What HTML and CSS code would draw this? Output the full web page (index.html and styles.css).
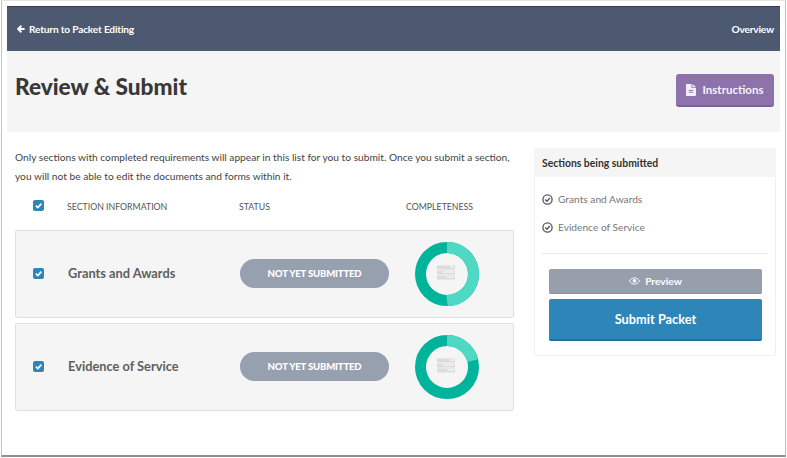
FILE: index.html
```html
<!DOCTYPE html>
<html lang="en">
<head>
<meta charset="utf-8">
<title>Review &amp; Submit</title>
<link rel="stylesheet" href="styles.css">
</head>
<body>
<div class="window">
  <div class="topbar">
    <a class="toplink"><svg class="arrow" viewBox="0 0 10 10"><path d="M5.500 1 1.500 5l4 4M2 5H9.500" fill="none" stroke="#fff" stroke-width="2.400"/></svg>Return to Packet Editing</a>
    <a class="toplink">Overview</a>
  </div>
  <div class="titleband">
    <h1>Review &amp; Submit</h1>
    <button class="btn-instructions"><svg class="docicon" viewBox="0 0 11 13"><path d="M0 1a1 1 0 0 1 1-1h5v4h5v8a1 1 0 0 1-1 1H1a1 1 0 0 1-1-1z" fill="#f3eef7"/><path d="M7 0l4 3.200H7z" fill="#f3eef7"/><path d="M3 7h5M3 9h5" stroke="#8e72ac" stroke-width="1"/></svg>Instructions</button>
  </div>
  <div class="content">
    <main class="main">
      <p class="intro">Only sections with completed requirements will appear in this list for you to submit. Once you submit a section,<br>you will not be able to edit the documents and forms within it.</p>
      <div class="headrow">
        <span class="cell-check"><span class="checkbox"><svg viewBox="0 0 11 11"><path d="M2.800 5.600 4.800 7.500 8.400 3.600" fill="none" stroke="#fff" stroke-width="1.700"/></svg></span></span>
        <span class="cell-name headlabel">SECTION INFORMATION</span>
        <span class="cell-status headlabel">STATUS</span>
        <span class="cell-comp headlabel">COMPLETENESS</span>
      </div>
      <div class="row">
        <span class="cell-check"><span class="checkbox"><svg viewBox="0 0 11 11"><path d="M2.800 5.600 4.800 7.500 8.400 3.600" fill="none" stroke="#fff" stroke-width="1.700"/></svg></span></span>
        <span class="cell-name rowname">Grants and Awards</span>
        <span class="cell-status"><span class="pill">NOT YET SUBMITTED</span></span>
        <svg class="donut" viewBox="0 0 64 64">
          <circle cx="32" cy="32" r="26.500" fill="none" stroke="#00b39b" stroke-width="11"/>
          <circle cx="32" cy="32" r="26.500" fill="none" stroke="#4fd9c5" stroke-width="11" pathLength="100" stroke-dasharray="50 50" transform="rotate(-90 32 32)"/>
          <path d="M22 23.500h18v4H22zM22 28.500h18v4H22zM22 33.500h18v4H22z" fill="#dcdcdc"/>
          <path d="M35 25h4M28 30h11M32 35h7" stroke="#fff" stroke-width="1"/>
        </svg>
      </div>
      <div class="row">
        <span class="cell-check"><span class="checkbox"><svg viewBox="0 0 11 11"><path d="M2.800 5.600 4.800 7.500 8.400 3.600" fill="none" stroke="#fff" stroke-width="1.700"/></svg></span></span>
        <span class="cell-name rowname">Evidence of Service</span>
        <span class="cell-status"><span class="pill">NOT YET SUBMITTED</span></span>
        <svg class="donut" viewBox="0 0 64 64">
          <circle cx="32" cy="32" r="26.500" fill="none" stroke="#00b39b" stroke-width="11"/>
          <circle cx="32" cy="32" r="26.500" fill="none" stroke="#4fd9c5" stroke-width="11" pathLength="100" stroke-dasharray="21 79" transform="rotate(-90 32 32)"/>
          <path d="M22 23.500h18v4H22zM22 28.500h18v4H22zM22 33.500h18v4H22z" fill="#dcdcdc"/>
          <path d="M35 25h4M28 30h11M32 35h7" stroke="#fff" stroke-width="1"/>
        </svg>
      </div>
    </main>
    <aside class="panel">
      <div class="panel-head">Sections being submitted</div>
      <div class="panel-body">
        <ul class="sections">
          <li><svg class="tick" viewBox="0 0 11 11"><circle cx="5.500" cy="5.500" r="4.600" fill="none" stroke="#555" stroke-width="1.300"/><path d="M3.200 5.600 4.900 7.200 7.900 4" fill="none" stroke="#555" stroke-width="1.400"/></svg>Grants and Awards</li>
          <li><svg class="tick" viewBox="0 0 11 11"><circle cx="5.500" cy="5.500" r="4.600" fill="none" stroke="#555" stroke-width="1.300"/><path d="M3.200 5.600 4.900 7.200 7.900 4" fill="none" stroke="#555" stroke-width="1.400"/></svg>Evidence of Service</li>
        </ul>
        <div class="actions">
          <button class="btn-preview"><svg class="eye" viewBox="0 0 12 8"><path d="M.5 4C2 1.600 4 .6 6 .6S10 1.600 11.500 4C10 6.400 8 7.400 6 7.400S2 6.400.5 4Z" fill="none" stroke="#fff" stroke-width="1"/><circle cx="6" cy="3.800" r="2" fill="#fff"/></svg>Preview</button>
          <button class="btn-submit">Submit Packet</button>
        </div>
      </div>
    </aside>
  </div>
</div>
</body>
</html>
```
FILE: styles.css
```css
* { box-sizing: border-box; }
html, body { margin: 0; padding: 0; background: #fff; }
body { width: 787px; height: 458px; overflow: hidden; font-family: "Lato", sans-serif; color: #444; }
.window {
  width: 785px;
  height: 457px;
  margin-left: 1px;
  padding: 5px 5px 0 5px;
  border-left: 1px solid #c4c4c4;
  border-right: 1px solid #bdbdbd;
  border-top: 1px solid #e4e4e4;
  border-bottom: 2px solid #8f8f8f;
}
.topbar {
  height: 45px;
  background: #4c5970;
  border-top: 1px solid #363f50;
  display: flex;
  justify-content: space-between;
  align-items: center;
  padding: 0 6px 0 10px;
}
.toplink { display: flex; align-items: center; gap: 4px; color: #fff; font-size: 10.200px; font-weight: 700; letter-spacing: -0.2px; }
.arrow { width: 8px; height: 8px; }
.titleband {
  height: 81px;
  background: #f5f5f5;
  display: flex;
  justify-content: space-between;
  align-items: flex-start;
  padding: 23px 6px 0 8px;
}
h1 { margin: 0; font-size: 22.600px; line-height: 26px; font-weight: 900; color: #383838; font-family: "Lato", sans-serif; }
.btn-instructions {
  width: 98px;
  height: 33px;
  border: 0;
  border-bottom: 2px solid #7a5f98;
  border-radius: 3px;
  background: #8e72ac;
  color: #f6f2fa;
  font: 700 11.500px "Lato", sans-serif;
  display: flex;
  align-items: center;
  justify-content: center;
  gap: 6px;
  padding: 0;
}
.docicon { width: 10px; height: 12px; }
.content { display: flex; padding: 16px 0 0 8px; gap: 20px; }
.main { width: 499px; }
.intro { margin: 0; font-size: 10.200px; line-height: 19px; color: #444; white-space: nowrap; }
.headrow { display: flex; align-items: center; height: 24px; margin-top: 7px; color: #555; }
.headlabel { font-size: 8.750px; padding-top: 3px; }
.cell-check { width: 52px; padding-left: 18px; display: flex; flex: none; }
.cell-name { width: 172px; flex: none; }
.cell-status { width: 167px; flex: none; }
.cell-comp { flex: none; }
.checkbox { width: 11px; height: 11px; border-radius: 2px; background: #2e86b8; display: block; }
.checkbox svg { display: block; width: 11px; height: 11px; }
.row {
  display: flex;
  align-items: center;
  height: 88px;
  margin-top: 5px;
  background: #f5f5f5;
  border: 1px solid #e0e0e0;
  border-radius: 2px;
}
.headrow + .row { margin-top: 13px; }
.row .cell-check { width: 52px; padding: 0 0 1px 17px; }
.rowname { font-size: 12.800px; font-weight: 700; color: #5f5f5f; padding-bottom: 2px; }
.row .cell-name { width: 172px; }
.row .cell-status { width: 175px; padding-bottom: 2px; }
.pill {
  display: flex;
  align-items: center;
  justify-content: center;
  width: 149px;
  height: 29px;
  border-radius: 15px;
  background: #97a0af;
  color: #fff;
  font-size: 9.600px;
  font-weight: 900;
  letter-spacing: -0.2px;
}
.donut { width: 64px; height: 64px; flex: none; }
.panel { width: 242px; height: 208px; border: 1px solid #f0f0f0; border-radius: 3px; }
.panel-head {
  height: 29px;
  margin: -1px -1px 0;
  background: #f5f5f5;
  border-radius: 3px 3px 0 0;
  padding: 0 8px;
  display: flex;
  align-items: center;
  font-size: 10.400px;
  font-weight: 700;
  color: #333;
}
.panel-body { padding: 8px 7px 0; }
.sections { list-style: none; margin: 0; padding: 0 0 12px; border-bottom: 1px solid #ebebeb; }
.sections li { display: flex; align-items: center; gap: 5px; height: 28px; font-size: 10.200px; color: #777; }
.tick { width: 11px; height: 11px; flex: none; }
.actions { display: flex; flex-direction: column; gap: 5px; padding: 15px 6px 0 7px; }
.btn-preview {
  height: 25px;
  border: 0;
  border-bottom: 1px solid #8a92a1;
  border-radius: 2px;
  background: #979fac;
  color: #fff;
  font: 700 10.200px "Lato", sans-serif;
  display: flex;
  align-items: center;
  justify-content: center;
  gap: 5px;
  padding: 0;
}
.eye { width: 11px; height: 8px; }
.btn-submit {
  height: 42px;
  border: 0;
  border-bottom: 2px solid #22719c;
  border-radius: 2px;
  background: #2e86b8;
  color: #fff;
  font: 700 12.800px "Lato", sans-serif;
  padding: 0;
}
```
